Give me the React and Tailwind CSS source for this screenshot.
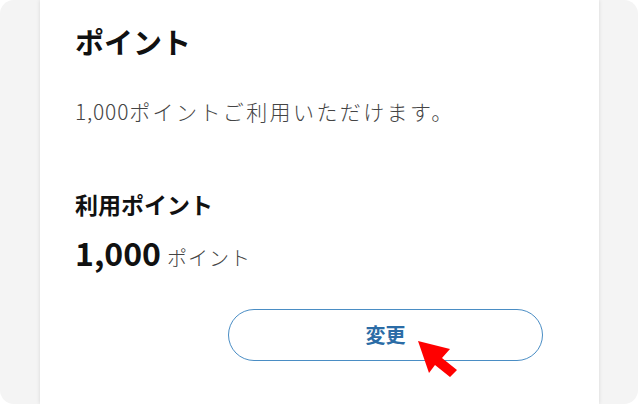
export default function App() {
  return (
    <div className="relative h-[404px] w-[638px] overflow-hidden rounded-[14px] bg-[#f4f4f4] font-['Noto_Sans_CJK_JP',sans-serif]">
      <div className="ml-[40px] flex h-full w-[559px] flex-col items-start bg-white pl-[35px] pt-[20px] shadow-[0_0_4px_rgba(0,0,0,0.12)]">
        <h1 className="text-[29px] font-bold leading-[42px] text-[#111]">ポイント</h1>
        <p className="mt-[34px] text-[21px] font-light leading-[30px] text-[#444]">
          <span className="tracking-[0.8px]">1,000</span>
          <span className="tracking-[2.4px]">ポイントご利用いただけます。</span>
        </p>
        <h2 className="mt-[62px] text-[23px] font-bold leading-[32px] text-[#111]">利用ポイント</h2>
        <div className="mt-[10px] flex items-baseline gap-[6px]">
          <span className="text-[32px] font-bold leading-[44px] text-[#111]">1,000</span>
          <span className="text-[20px] font-light tracking-[1px] text-[#444]">ポイント</span>
        </div>
        <button className="ml-[153px] mt-[35px] flex h-[52px] w-[315px] items-center justify-center rounded-full border-[1.5px] border-[#4a8dc4] bg-white text-[20px] font-bold text-[#2b6ca6]">変更</button>
      </div>
      <svg className="absolute left-0 top-0" width="638" height="404" viewBox="0 0 638 404">
        <polygon points="418,341 450,349 442,358 457,370 450,377 435,365 429,373" fill="#ff0000" />
      </svg>
    </div>
  );
}
